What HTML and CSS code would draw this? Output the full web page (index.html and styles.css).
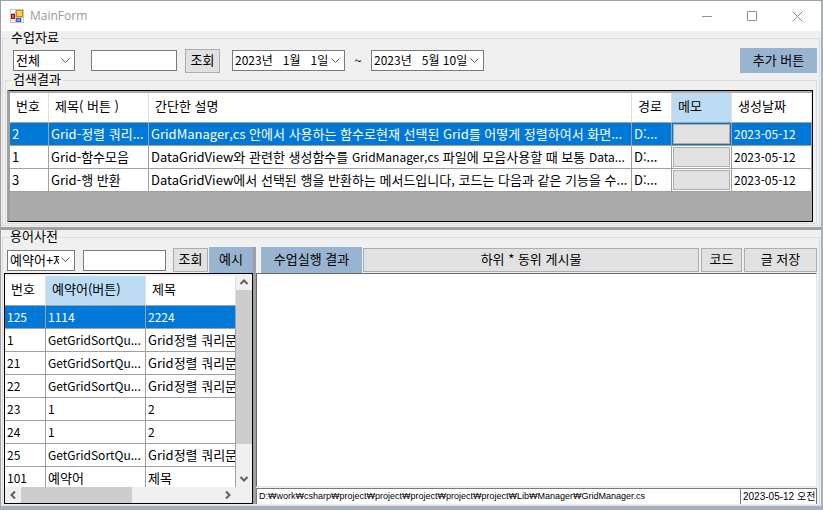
FILE: index.html
```
<!DOCTYPE html>
<html lang="ko">
<head>
<meta charset="utf-8">
<title>MainForm</title>
<link rel="stylesheet" href="styles.css">
</head>
<body>
<div class="window">
  <header class="titlebar">
    <svg class="app-icon" width="14" height="14" viewBox="0 0 14 14" aria-hidden="true">
      <rect width="14" height="14" fill="#c4c4c4"/>
      <rect x="1" y="1" width="4" height="3" fill="#fff"/>
      <rect x="1" y="10" width="4" height="3" fill="#e8eef8"/>
      <rect x="6" y="1" width="7" height="7" fill="#c98a12"/>
      <rect x="7" y="2" width="5" height="5" fill="#fcd04b"/>
      <rect x="1" y="5" width="4" height="5" fill="#9c1010"/>
      <rect x="2" y="6" width="2" height="3" fill="#e8604c"/>
      <rect x="6" y="9" width="5" height="4" fill="#2f66c8"/>
      <rect x="7" y="10" width="3" height="2" fill="#6ea4f0"/>
      <rect x="12" y="9" width="1" height="4" fill="#fff"/>
    </svg>
    <h1>MainForm</h1>
    <div class="window-buttons">
      <button aria-label="최소화"><svg width="11" height="11" viewBox="0 0 11 11"><path d="M0 5.500H10"/></svg></button>
      <button aria-label="최대화"><svg width="11" height="11" viewBox="0 0 11 11"><path d="M.5.5H9.500V9.500H.5Z"/></svg></button>
      <button aria-label="닫기"><svg width="11" height="11" viewBox="0 0 11 11"><path d="M.5.5L10.500 10.500M10.500.5L.5 10.500"/></svg></button>
    </div>
  </header>

  <fieldset class="group materials">
    <legend>수업자료</legend>
    <div class="toolbar">
      <span class="combo kind"><select aria-label="구분"><option>전체</option></select><svg width="9" height="6" viewBox="0 0 9 6"><path d="M.5.5L4.500 4.500L8.500.5"/></svg></span>
      <input class="text keyword" type="text" aria-label="검색어">
      <button class="btn small">조회</button>
      <span class="combo date from"><input type="text" aria-label="시작일" value="2023년&nbsp;&nbsp; 1월&nbsp;&nbsp; 1일"><svg width="9" height="6" viewBox="0 0 9 6"><path d="M.5.5L4.500 4.500L8.500.5"/></svg></span>
      <span class="tilde">~</span>
      <span class="combo date"><input type="text" aria-label="종료일" value="2023년&nbsp;&nbsp; 5월&nbsp;10일"><svg width="9" height="6" viewBox="0 0 9 6"><path d="M.5.5L4.500 4.500L8.500.5"/></svg></span>
      <button class="btn accent add">추가 버튼</button>
    </div>
    <fieldset class="group results">
      <legend>검색결과</legend>
      <div class="grid result-grid">
        <table>
          <colgroup><col class="c-no"><col class="c-title"><col><col class="c-path"><col class="c-memo"><col class="c-date"></colgroup>
          <thead><tr><th>번호</th><th>제목( 버튼 )</th><th>간단한 설명</th><th>경로</th><th class="hot">메모</th><th>생성날짜</th></tr></thead>
          <tbody>
            <tr class="selected"><td>2</td><td>Grid-정렬 쿼리...</td><td>GridManager,cs 안에서 사용하는 함수로현재 선택된 Grid를 어떻게 정렬하여서 화면...</td><td>D:...</td><td class="memo"><button aria-label="메모"></button></td><td class="latin">2023-05-12</td></tr>
            <tr><td>1</td><td>Grid-함수모음</td><td>DataGridView와 관련한 생성함수를 <span class="latin">GridManager,cs</span> 파일에 모음사용할 때 보통 <span class="latin">Data...</span></td><td>D:...</td><td class="memo"><button aria-label="메모"></button></td><td class="latin">2023-05-12</td></tr>
            <tr><td>3</td><td>Grid-행 반환</td><td>DataGridView에서 선택된 행을 반환하는 메서드입니다, 코드는 다음과 같은 기능을 수...</td><td>D:...</td><td class="memo"><button aria-label="메모"></button></td><td class="latin">2023-05-12</td></tr>
          </tbody>
        </table>
      </div>
    </fieldset>
  </fieldset>

  <div class="splitter"></div>

  <fieldset class="group dictionary">
    <legend>용어사전</legend>
    <div class="panes">
      <section class="terms">
        <div class="toolbar">
          <span class="combo field"><select aria-label="검색 항목"><option>예약어+제목</option></select><svg width="9" height="6" viewBox="0 0 9 6"><path d="M.5.5L4.500 4.500L8.500.5"/></svg></span>
          <input class="text term" type="text" aria-label="용어">
          <button class="btn small">조회</button>
          <button class="btn accent example">예시</button>
        </div>
        <div class="grid term-grid">
          <div class="viewport">
            <table>
              <colgroup><col class="t-no"><col class="t-word"><col></colgroup>
              <thead><tr><th>번호</th><th class="hot">예약어(버튼)</th><th>제목</th></tr></thead>
              <tbody>
                <tr class="selected"><td class="latin">125</td><td class="latin">1114</td><td class="latin">2224</td></tr>
                <tr><td class="latin">1</td><td class="latin">GetGridSortQu...</td><td>Grid정렬 쿼리문</td></tr>
                <tr><td class="latin">21</td><td class="latin">GetGridSortQu...</td><td>Grid정렬 쿼리문</td></tr>
                <tr><td class="latin">22</td><td class="latin">GetGridSortQu...</td><td>Grid정렬 쿼리문</td></tr>
                <tr><td class="latin">23</td><td class="latin">1</td><td class="latin">2</td></tr>
                <tr><td class="latin">24</td><td class="latin">1</td><td class="latin">2</td></tr>
                <tr><td class="latin">25</td><td class="latin">GetGridSortQu...</td><td>Grid정렬 쿼리문</td></tr>
                <tr><td class="latin">101</td><td>예약어</td><td>제목</td></tr>
              </tbody>
            </table>
          </div>
          <div class="scroll vertical">
            <svg width="16" height="16" viewBox="0 0 16 16"><path d="M4.500 10L8 6.500L11.500 10"/></svg>
            <div class="track"><div class="thumb"></div></div>
            <svg width="16" height="16" viewBox="0 0 16 16"><path d="M4.500 6L8 9.500L11.500 6"/></svg>
          </div>
          <div class="scroll horizontal">
            <svg width="16" height="16" viewBox="0 0 16 16"><path d="M10 4.500L6.500 8L10 11.500"/></svg>
            <div class="track"><div class="thumb"></div></div>
            <svg width="16" height="16" viewBox="0 0 16 16"><path d="M6 4.500L9.500 8L6 11.500"/></svg>
          </div>
        </div>
      </section>
      <div class="divider"></div>
      <section class="detail">
        <nav class="tabs">
          <button class="btn accent run">수업실행 결과</button>
          <button class="btn posts">하위 * 동위 게시물</button>
          <button class="btn code">코드</button>
          <button class="btn save">글 저장</button>
        </nav>
        <textarea aria-label="수업실행 결과"></textarea>
        <footer class="status">
          <span class="path">D:₩work₩csharp₩project₩project₩project₩project₩project₩Lib₩Manager₩GridManager.cs</span>
          <span class="stamp">2023-05-12 오전</span>
        </footer>
      </section>
    </div>
  </fieldset>
</div>
</body>
</html>
```
FILE: styles.css
```
* { box-sizing: border-box; }

body {
  margin: 0;
  background: #aab3c3;
  color: #000;
  font: 13px/15px "Noto Sans CJK KR", sans-serif;
}

button, input, select, textarea {
  font: inherit;
  color: inherit;
  border-radius: 0;
  margin: 0;
}

.window {
  display: flex;
  flex-direction: column;
  height: 100vh;
  border: 1px solid #a0a0a0;
  border-right: 2px solid #a7b0c1;
  border-bottom: 4px solid #a7b0c1;
  background: #f0f0f0;
}

/* Title bar */
.titlebar {
  display: flex;
  align-items: center;
  height: 30px;
  padding: 0 1px 0 9px;
  background: #fff;
}
.titlebar h1 {
  flex: 1;
  margin: 0 0 0 6px;
  color: #999;
  font: 12px/16px "Open Sans", sans-serif;
}
.window-buttons { display: flex; }
.window-buttons button {
  display: grid;
  place-items: center;
  width: 45px;
  height: 30px;
  padding: 0;
  border: 0;
  background: none;
}
svg { fill: none; stroke: #606060; }
.app-icon { stroke: none; }
.window-buttons svg { stroke: #909090; }

/* Groups */
.group {
  min-width: 0;
  margin: 0;
  border: 1px solid #dcdcdc;
}
.group > legend {
  height: 15px;
  margin-left: 4px;
  padding: 0 2px;
  line-height: 11px;
}
.materials {
  margin: 0 1px;
  padding: 2px 2px 1px;
}
.results { padding: 2px 2px 1px 1px; }
.dictionary {
  flex: 1;
  min-height: 0;
  margin: 0 1px;
  padding: 2px 1px 1px;
}
.splitter {
  flex: none;
  height: 3px;
  margin-top: 1px;
  background: #a0a0a0;
}

/* Form controls */
.toolbar, .tabs { display: flex; align-items: center; }
.toolbar { height: 25px; }
.materials > .toolbar { padding-left: 8px; }
.combo {
  display: flex;
  align-items: center;
  height: 21px;
  padding-right: 4px;
  border: 1px solid #7a7a7a;
  background: #fff;
}
.combo select, .combo input {
  flex: 1;
  width: 0;
  min-width: 0;
  height: 19px;
  padding: 0 0 2px 2px;
  border: 0;
  appearance: none;
  background: none;
  line-height: 15px;
  text-overflow: clip;
}
.combo svg { flex: none; margin-left: 2px; }
.kind { width: 62px; }
.date { width: 113px; font-size: 12px; }
.text {
  height: 21px;
  padding: 0 2px;
  border: 1px solid #7a7a7a;
  background: #fff;
}
.keyword { width: 86px; margin: 0 8px 0 16px; }
.from { margin-left: 12px; }
.tilde { width: 26px; text-align: center; }
.field { width: 68px; }
.term { width: 83px; margin: 0 7px 0 8px; }

.btn {
  height: 24px;
  padding: 0 0 3px;
  border: 1px solid #adadad;
  background: #e1e1e1;
  white-space: nowrap;
}
.btn.accent { height: 26px; border: 0; background: #99b4d1; }
.small { width: 35px; }
.toolbar .add { width: 77px; height: 25px; margin-left: auto; }

/* Data grids */
.grid {
  border: 1px solid #000;
  background: #ababab;
}
.result-grid {
  height: 132px;
  padding: 2px 0 0;
  border-left: 3px solid #a0a0a0;
  margin-right: 1px;
}
table {
  width: 100%;
  table-layout: fixed;
  border-spacing: 0;
}
th, td {
  height: 23px;
  padding: 0 0 2px 2px;
  border-right: 1px solid #a0a0a0;
  border-bottom: 1px solid #a0a0a0;
  background: #fff;
  overflow: hidden;
  white-space: nowrap;
  text-align: left;
  font-weight: normal;
}
th {
  height: 30px;
  padding: 0 0 5px 6px;
  border-right-color: #e0e0e0;
}
th.hot { background: #bcdcf4; }
.latin { font-size: 12px; }
.selected td { background: #0078d7; color: #fff; }
.memo { padding: 1px; }
.memo button {
  display: block;
  width: 100%;
  height: 20px;
  border: 1px solid #adadad;
  background: #e1e1e1;
}
.c-no { width: 39px; }
.c-title { width: 100px; }
.c-path { width: 40px; }
.c-memo { width: 60px; }
.c-date { width: 80px; }

/* Lower panes */
.panes { display: flex; height: 100%; }
.terms {
  display: flex;
  flex-direction: column;
  flex: none;
  width: 249px;
}
.terms .toolbar { height: 26px; padding-left: 3px; }
.example { flex: 1; margin-left: 1px; }
.term-grid {
  display: grid;
  grid-template: minmax(0, 1fr) 16px / minmax(0, 1fr) 16px;
  flex: 1;
  min-height: 0;
  background: #f0f0f0;
}
.viewport { overflow: hidden; padding-top: 2px; }
.t-no { width: 41px; }
.t-word { width: 100px; }
.scroll { display: flex; background: #f0f0f0; }
.scroll svg { flex: none; stroke-width: 2; }
.vertical { flex-direction: column; }
.horizontal { grid-column: 1; }
.track { display: flex; flex: 1; }
.thumb { background: #cdcdcd; }
.vertical .track { flex-direction: column; }
.vertical .thumb { height: 85%; }
.horizontal .thumb { width: 56%; }
.divider { width: 3px; background: #a0a0a0; }

.detail {
  display: flex;
  flex-direction: column;
  flex: 1;
  min-width: 0;
  margin-right: 1px;
}
.tabs { gap: 2px; padding: 0 0 0 5px; }
.run { width: 101px; margin-right: -1px; }
.posts { flex: 1; }
.code { width: 41px; }
.save { width: 73px; }
.detail textarea {
  flex: 1;
  min-height: 0;
  border: 1px solid #e3e3e3;
  border-top-color: #696969;
  border-left-color: #696969;
  background: #fff;
  resize: none;
}
.status {
  display: flex;
  height: 16px;
  margin-top: 1px;
  font: 10px/15px "Liberation Sans", "Noto Sans CJK KR", sans-serif;
}
.status span {
  border: 1px solid #7a7a7a;
  border-width: 1px 0 0 1px;
  padding-left: 2px;
  background: #fff;
  overflow: hidden;
  white-space: nowrap;
}
.status .path { flex: 1; font-size: 9px; }
.status .stamp { width: 77px; border-right-width: 1px; }
```
